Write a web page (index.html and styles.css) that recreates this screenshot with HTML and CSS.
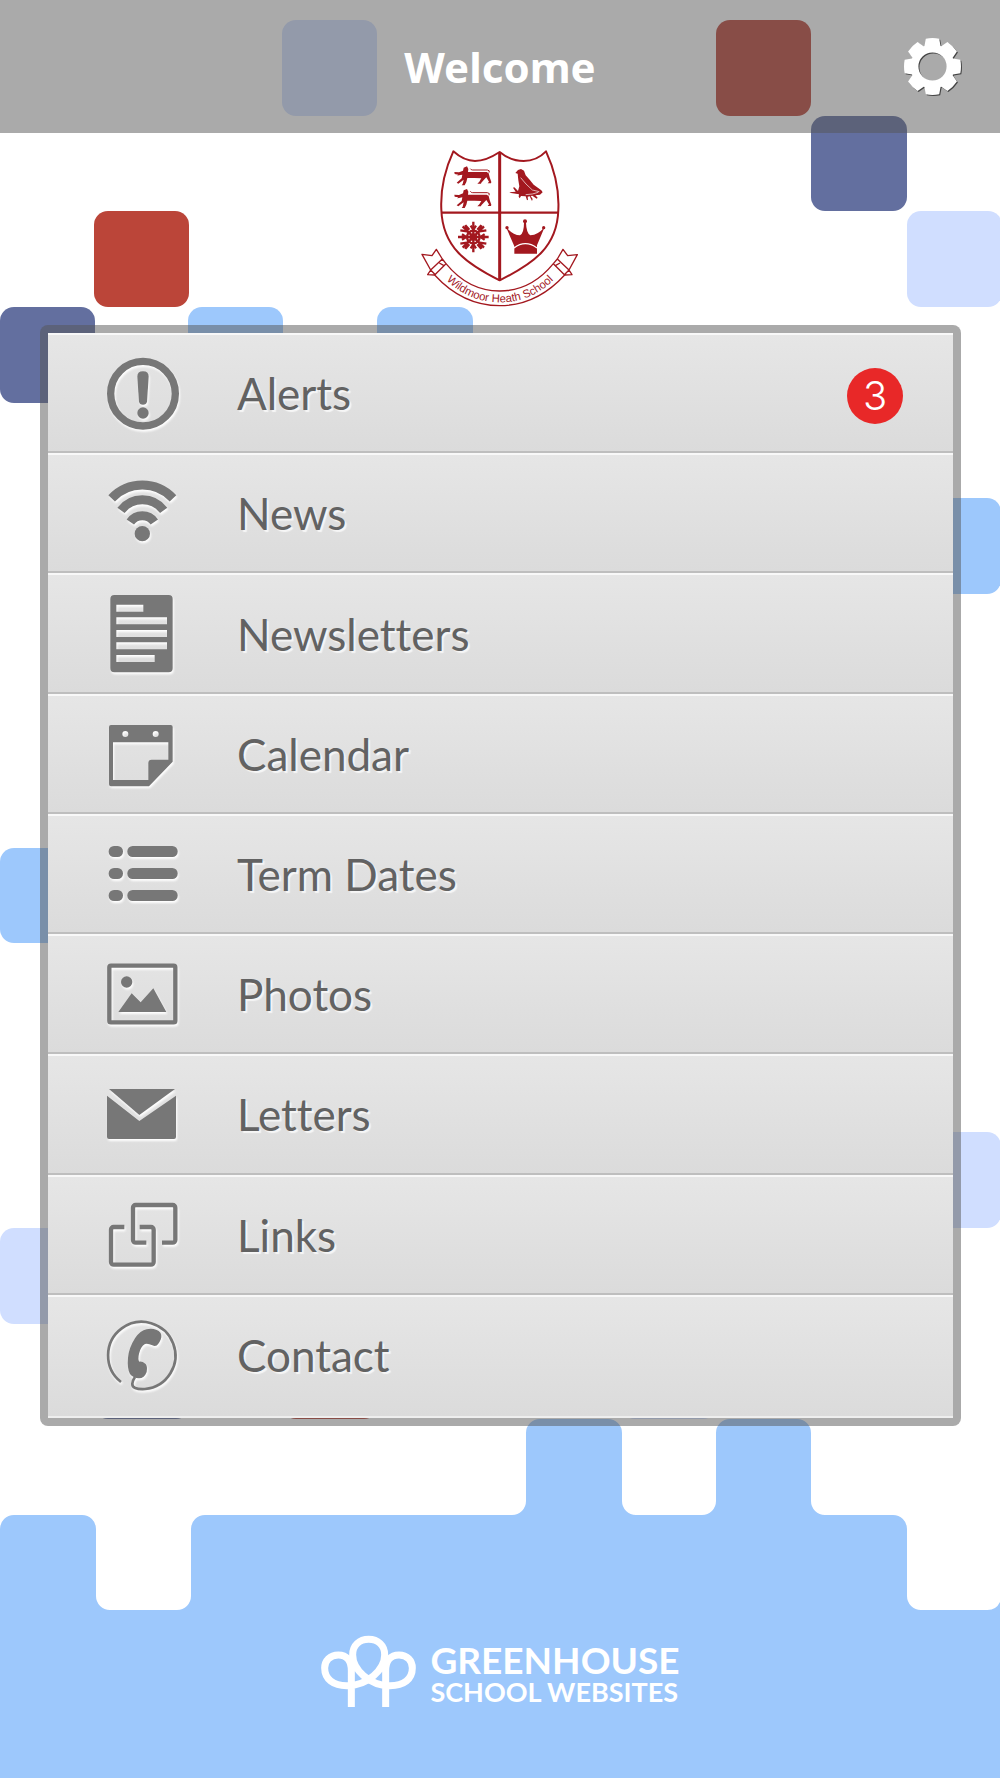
FILE: index.html
```html
<!DOCTYPE html>
<html lang="en">
<head>
  <meta charset="UTF-8" />
  <meta name="viewport" content="width=device-width, initial-scale=1" />
  <title>Welcome - Wildmoor Heath School</title>
  <link rel="stylesheet" href="styles.css">
</head>
<body>

  <!-- Coloured blocks behind the page -->
  <svg class="backdrop" viewBox="0 0 1000 1778" preserveAspectRatio="xMidYMax slice" aria-hidden="true">
    <g class="lavender">
      <rect x="282" y="20" width="95" height="96" rx="14" />
      <rect x="907" y="211" width="95" height="96" rx="14" />
      <rect x="905" y="1132" width="96" height="96" rx="14" />
      <rect x="0" y="1228" width="96" height="96" rx="14" />
      <rect x="621" y="1323" width="96" height="96" rx="14" />
    </g>
    <g class="red">
      <rect x="716" y="20" width="95" height="96" rx="14" />
      <rect x="94" y="211" width="95" height="96" rx="14" />
      <rect x="282" y="1323" width="96" height="96" rx="14" />
    </g>
    <g class="navy">
      <rect x="811" y="116" width="96" height="95" rx="14" />
      <rect x="0" y="307" width="95" height="96" rx="14" />
      <rect x="94" y="1323" width="96" height="96" rx="14" />
    </g>
    <g class="sky">
      <rect x="188" y="307" width="95" height="96" rx="14" />
      <rect x="377" y="307" width="96" height="96" rx="14" />
      <rect x="905" y="498" width="96" height="96" rx="14" />
      <rect x="0" y="848" width="96" height="95" rx="14" />
      <path d="M0 1529a14 14 0 0 1 14-14H82a14 14 0 0 1 14 14V1596a14 14 0 0 0 14 14H177a14 14 0 0 0 14-14V1529a14 14 0 0 1 14-14H512a14 14 0 0 0 14-14V1433a14 14 0 0 1 14-14H608a14 14 0 0 1 14 14V1501a14 14 0 0 0 14 14H702a14 14 0 0 0 14-14V1433a14 14 0 0 1 14-14H797a14 14 0 0 1 14 14V1501a14 14 0 0 0 14 14H893a14 14 0 0 1 14 14V1596a14 14 0 0 0 14 14H987a14 14 0 0 0 13-8V1778H0z" />
    </g>
  </svg>

  <div class="page">
    <header class="topbar">
      <h1>Welcome</h1>
      <button class="settings" type="button" aria-label="Settings">
        <svg viewBox="0 0 170 170">
          <defs>
            <path id="tooth" d="M65 2Q85-2 105 2L109 24Q112 28 120 34L50 34Q58 28 61 24z" />
          </defs>
          <circle cx="85" cy="85" r="52" fill="none" stroke="#fff" stroke-width="20" />
          <use href="#tooth" />
          <use href="#tooth" transform="rotate(45 85 85)" />
          <use href="#tooth" transform="rotate(90 85 85)" />
          <use href="#tooth" transform="rotate(135 85 85)" />
          <use href="#tooth" transform="rotate(180 85 85)" />
          <use href="#tooth" transform="rotate(225 85 85)" />
          <use href="#tooth" transform="rotate(270 85 85)" />
          <use href="#tooth" transform="rotate(315 85 85)" />
        </svg>
      </button>
    </header>

    <!-- School crest -->
    <div class="crest">
      <svg viewBox="60 50 480 480" role="img" aria-label="Wildmoor Heath School crest">
        <defs>
          <path id="motto" d="M118 426Q192 516 300 516T482 426" />
          <g id="lion">
            <path d="M163 125l14 1 12-5 2-9 10-4 4 8-1 9h56l6 4 3 12 5 14-1 4h-10l4-5-8-13-5 5-10 11-1 3h-11l6-6 6-10-20-1-22 0-3 12-5 10h-9l3-4 3-13-12 9-4 3-5-3 15-13 2-11-10 2-6 1 4-3-11-2z" />
            <path d="M211 115Q213 119 218 119H262Q271 120 267 127" fill="none" stroke="#a3181f" stroke-width="3" />
          </g>
        </defs>
        <g fill="none" stroke="#a3181f" stroke-width="6" stroke-linejoin="round">
          <path d="M160 63Q192 92 225 92T299 65Q332 92 371 92T438 63C462 115 478 178 475 238C472 350 400 400 299 450C198 400 128 350 124 238C121 178 136 115 160 63z" />
          <path d="M124 247H475" stroke-width="7" />
          <path d="M299 65V450" stroke-width="9" />
        </g>
        <g fill="none" stroke="#a3181f" stroke-width="4" stroke-linejoin="round">
          <path d="M138 400Q205 482 299 482T460 400L494 434Q410 526 299 526T104 434z" />
          <path d="M104 434L83 433 92 419 66 372 96 376 109 357 127 386 138 400M127 386L92 419M118 398l14 8M92 419l14 14" />
          <path d="M494 434L516 433 507 419 532 373 503 376 489 357 472 386 460 400M472 386L507 419M480 398l-14 8M507 419l-14 14" />
        </g>
        <g fill="#a3181f">
          <use href="#lion" />
          <use href="#lion" transform="translate(0 68)" />
          <!-- bird -->
          <path d="M346 128l8-9 9-3 9 5 5 14 12 13 12 15 23 17 4 6-8 7-14 2 7 7-3 3-13-9-5 1 6 9-2 6-7-14-6 1 1 9-3 2-4-12-14-1-4 7-3-5 1-7-24-4-5-2 19-2-8-12 4-1 11 11 4-14-3-18-2-20z" />
          <path d="M362 142l16 19 19 18 21 5M377 193l20-2 18-5" fill="none" stroke="#fff" stroke-width="2" />
          <!-- crown -->
          <circle cx="375" cy="273" r="6" />
          <circle cx="321" cy="292" r="5" />
          <circle cx="431" cy="292" r="5" />
          <path d="M318 290Q338 314 360 315Q372 308 372 277H378Q379 308 391 315Q414 314 434 290L411 345V370H343L343 348z" />
          <path d="M342 353Q376 327 411 353" fill="none" stroke="#fff" stroke-width="4" />
          <!-- rose -->
          <g stroke="#a3181f" stroke-width="7" fill="none">
            <path d="M220 274V366M174 320H266M188 288l64 64M252 288l-64 64" />
            <path d="M212 286l8 12 8-12M212 354l8-12 8 12M186 312l12 8-12 8M254 312l-12 8 12 8M181 300l20 3-5-18 12 13M259 300l-20 3 5-18-12 13M181 340l20-3-5 18 12-13M259 340l-20-3 5 18-12-13" />
            <circle cx="220" cy="320" r="19" />
            <circle cx="220" cy="320" r="8" fill="#a3181f" />
          </g>
        </g>
        <text class="motto"><textPath href="#motto" startOffset="50%">Wildmoor Heath School</textPath></text>
      </svg>
    </div>

    <nav class="menu">
      <ul>
        <li><a href="#alerts">
          <svg class="icon" viewBox="0 0 240 240">
            <circle cx="120" cy="122" r="97" fill="none" stroke="currentColor" stroke-width="22" />
            <path d="M103 71Q103 55 120 55T137 71L132 146Q130 155 120 155T108 146z" />
            <circle cx="120" cy="180" r="17" />
          </svg>
          <span>Alerts</span>
          <span class="badge">3</span>
        </a></li>
        <li><a href="#news">
          <svg class="icon" viewBox="0 0 240 240">
            <g fill="none" stroke="currentColor" stroke-width="27">
              <path d="M26 76A126 126 0 0 1 210 76" />
              <path d="M54 112A80 80 0 0 1 182 112" />
              <path d="M82 147A44 44 0 0 1 154 147" />
            </g>
            <circle cx="118" cy="182" r="23" />
          </svg>
          <span>News</span>
        </a></li>
        <li><a href="#newsletters">
          <svg class="icon" viewBox="0 0 240 240">
            <path fill-rule="evenodd" d="M34 3H197a12 12 0 0 1 12 12V223a12 12 0 0 1-12 12H34a12 12 0 0 1-12-12V15a12 12 0 0 1 12-12zM40 32V53H121V32zM40 70V91H192V70zM40 108V129H192V108zM40 145V166H192V145zM40 183V204H155V183z" />
          </svg>
          <span>Newsletters</span>
        </a></li>
        <li><a href="#calendar">
          <svg class="icon" viewBox="0 0 240 240">
            <path fill-rule="evenodd" d="M24 33H203a6 6 0 0 1 6 6V143L138 217H24a6 6 0 0 1-6-6V39a6 6 0 0 1 6-6zM30 85V198H136V147q0-10 10-10H196V85zM58 60a9 9 0 0 0 18 0a9 9 0 0 0-18 0zM149 60a9 9 0 0 0 18 0a9 9 0 0 0-18 0z" />
          </svg>
          <span>Calendar</span>
        </a></li>
        <li><a href="#term-dates">
          <svg class="icon" viewBox="0 0 240 240">
            <rect x="17" y="36" width="43" height="33" rx="16" />
            <rect x="73" y="36" width="151" height="33" rx="16" />
            <rect x="17" y="102" width="43" height="33" rx="16" />
            <rect x="73" y="102" width="151" height="33" rx="16" />
            <rect x="17" y="168" width="43" height="33" rx="16" />
            <rect x="73" y="168" width="151" height="33" rx="16" />
          </svg>
          <span>Term Dates</span>
        </a></li>
        <li><a href="#photos">
          <svg class="icon" viewBox="0 0 240 240">
            <rect x="19" y="35" width="198" height="170" rx="5" fill="none" stroke="currentColor" stroke-width="13" />
            <circle cx="71" cy="84" r="17" />
            <path d="M46 174L86 118 113 145 151 103 190 174z" />
          </svg>
          <span>Photos</span>
        </a></li>
        <li><a href="#letters">
          <svg class="icon" viewBox="0 0 240 240">
            <path d="M18 45H216L109 123z" />
            <path d="M12 65L109 141 219 65V189a6 6 0 0 1-6 6H18a6 6 0 0 1-6-6z" />
          </svg>
          <span>Letters</span>
        </a></li>
        <li><a href="#links">
          <svg class="icon" viewBox="0 0 240 240">
            <g fill="none" stroke="currentColor" stroke-width="13">
              <path d="M130 143H98a8 8 0 0 1-8-8V38a8 8 0 0 1 8-8H209a8 8 0 0 1 8 8V135a8 8 0 0 1-8 8H177" />
              <path d="M64 96H32a8 8 0 0 0-8 8V201a8 8 0 0 0 8 8H144a8 8 0 0 0 8-8V104a8 8 0 0 0-8-8H110" />
            </g>
          </svg>
          <span>Links</span>
        </a></li>
        <li><a href="#contact">
          <svg class="icon" viewBox="0 0 240 240">
            <path d="M54 201A101 101 0 1 1 126 222Q86 224 88 206Q89 196 96 186" fill="none" stroke="currentColor" stroke-width="8" />
            <path d="M131 43Q145 38 161 45Q175 51 175 62Q176 72 166 86Q160 96 148 91Q134 84 126 87Q113 95 108 116Q104 133 109 140Q117 138 128 147Q134 155 131 171Q124 190 108 190Q90 189 81 177Q72 160 75 128Q78 98 96 70Q112 46 131 43z" />
          </svg>
          <span>Contact</span>
        </a></li>
      </ul>
    </nav>

    <footer class="footer">
      <a class="brand" href="#greenhouse">
        <svg viewBox="60 70 291 222" aria-hidden="true">
          <path d="M154 289V180C154 150 140 133 115 133C90 133 74 150 74 172C74 205 100 225 140 225C205 225 254 175 254 132C254 104 234 86 206 86C178 86 158 104 158 132C158 175 207 225 270 225C312 225 337 205 337 172C337 150 322 133 297 133C272 133 257 150 257 180V289" fill="none" stroke="#fff" stroke-width="21" />
        </svg>
        <span class="brand-text">
          <span class="brand-name">GREENHOUSE</span>
          <span class="brand-sub">SCHOOL WEBSITES</span>
        </span>
      </a>
    </footer>
  </div>

</body>
</html>
```
FILE: styles.css
```css
* {
  box-sizing: border-box;
}
body {
  margin: 0;
  position: relative;
  background: #fff;
  font-family: Lato, "Open Sans", sans-serif;
}

/* Background blocks */
.backdrop {
  position: absolute;
  top: 0;
  left: 0;
  width: 100%;
  height: 100%;
}
.lavender { fill: #d0deff; }
.red { fill: #bb4539; }
.navy { fill: #636f9f; }
.sky { fill: #9dc8fc; }

.page {
  position: relative;
  display: flex;
  flex-direction: column;
  min-height: 100vh;
}

/* Header */
.topbar {
  display: grid;
  grid-template-columns: 1fr auto 1fr;
  align-items: center;
  height: 133px;
  padding: 0 39px;
  background: rgba(85, 85, 85, 0.5);
}
.topbar h1 {
  grid-column: 2;
  margin: 0;
  font-family: "Noto Sans", "Open Sans", sans-serif;
  font-size: 42px;
  line-height: 60px;
  color: #fff;
}
.settings {
  justify-self: end;
  padding: 0;
  border: none;
  background: none;
  cursor: pointer;
}
.settings svg {
  display: block;
  width: 57px;
  height: 57px;
  fill: #fff;
  overflow: visible;
  filter: drop-shadow(1px 1px 0 #444);
}

/* Crest */
.crest {
  height: 192px;
  padding-top: 14px;
  text-align: center;
}
.crest svg {
  width: 160px;
  height: 160px;
}
.motto {
  font-family: "Liberation Sans", Arial, sans-serif;
  font-size: 34px;
  fill: #a3181f;
  text-anchor: middle;
}

/* Menu */
.menu {
  flex: 1;
  display: flex;
  margin: 0 39px 0 40px;
  padding: 8px;
  border-radius: 8px;
  background: rgba(85, 85, 85, 0.5);
}
.menu ul {
  flex: 1;
  display: flex;
  flex-direction: column;
  margin: 0;
  padding: 0;
  list-style: none;
}
.menu li {
  flex: 1 1 auto;
  display: flex;
}
.menu a {
  flex: 1;
  display: flex;
  align-items: center;
  gap: 54px;
  padding: 0 50px 0 55px;
  border-top: 2px solid #f8f8f8;
  border-bottom: 2px solid #bebebe;
  background: linear-gradient(#e6e6e6, #dbdbdb);
  color: #626262;
  font-size: 44px;
  line-height: 54px;
  font-variant-ligatures: none;
  text-decoration: none;
  text-shadow: 2px 2px 1px #f6f6f6;
}
.menu li:last-child a {
  padding-bottom: 3px;
  border-bottom-color: #eee;
}
.menu a:hover {
  background: #d8d8d8;
}
.icon {
  width: 80px;
  height: 80px;
  fill: currentColor;
  color: #777;
  filter: drop-shadow(1px 2px 1px #fff);
}
.badge {
  display: flex;
  align-items: center;
  justify-content: center;
  width: 56px;
  height: 56px;
  margin: 6px 0 0 auto;
  border-radius: 50%;
  background: #e82828;
  color: #fff;
  font-family: Inter, sans-serif;
  font-size: 40px;
  font-weight: 300;
  text-shadow: none;
}

/* Footer */
.footer {
  height: 352px;
  padding-top: 208px;
}
.brand {
  display: flex;
  justify-content: center;
  align-items: center;
  gap: 13px;
  color: #fff;
  text-decoration: none;
}
.brand svg {
  width: 97px;
  height: 74px;
}
.brand-text {
  display: flex;
  flex-direction: column;
  padding-top: 4px;
  font-weight: 700;
}
.brand-name {
  font-size: 37px;
  line-height: 37px;
}
.brand-sub {
  font-size: 27px;
  line-height: 28px;
}
```
